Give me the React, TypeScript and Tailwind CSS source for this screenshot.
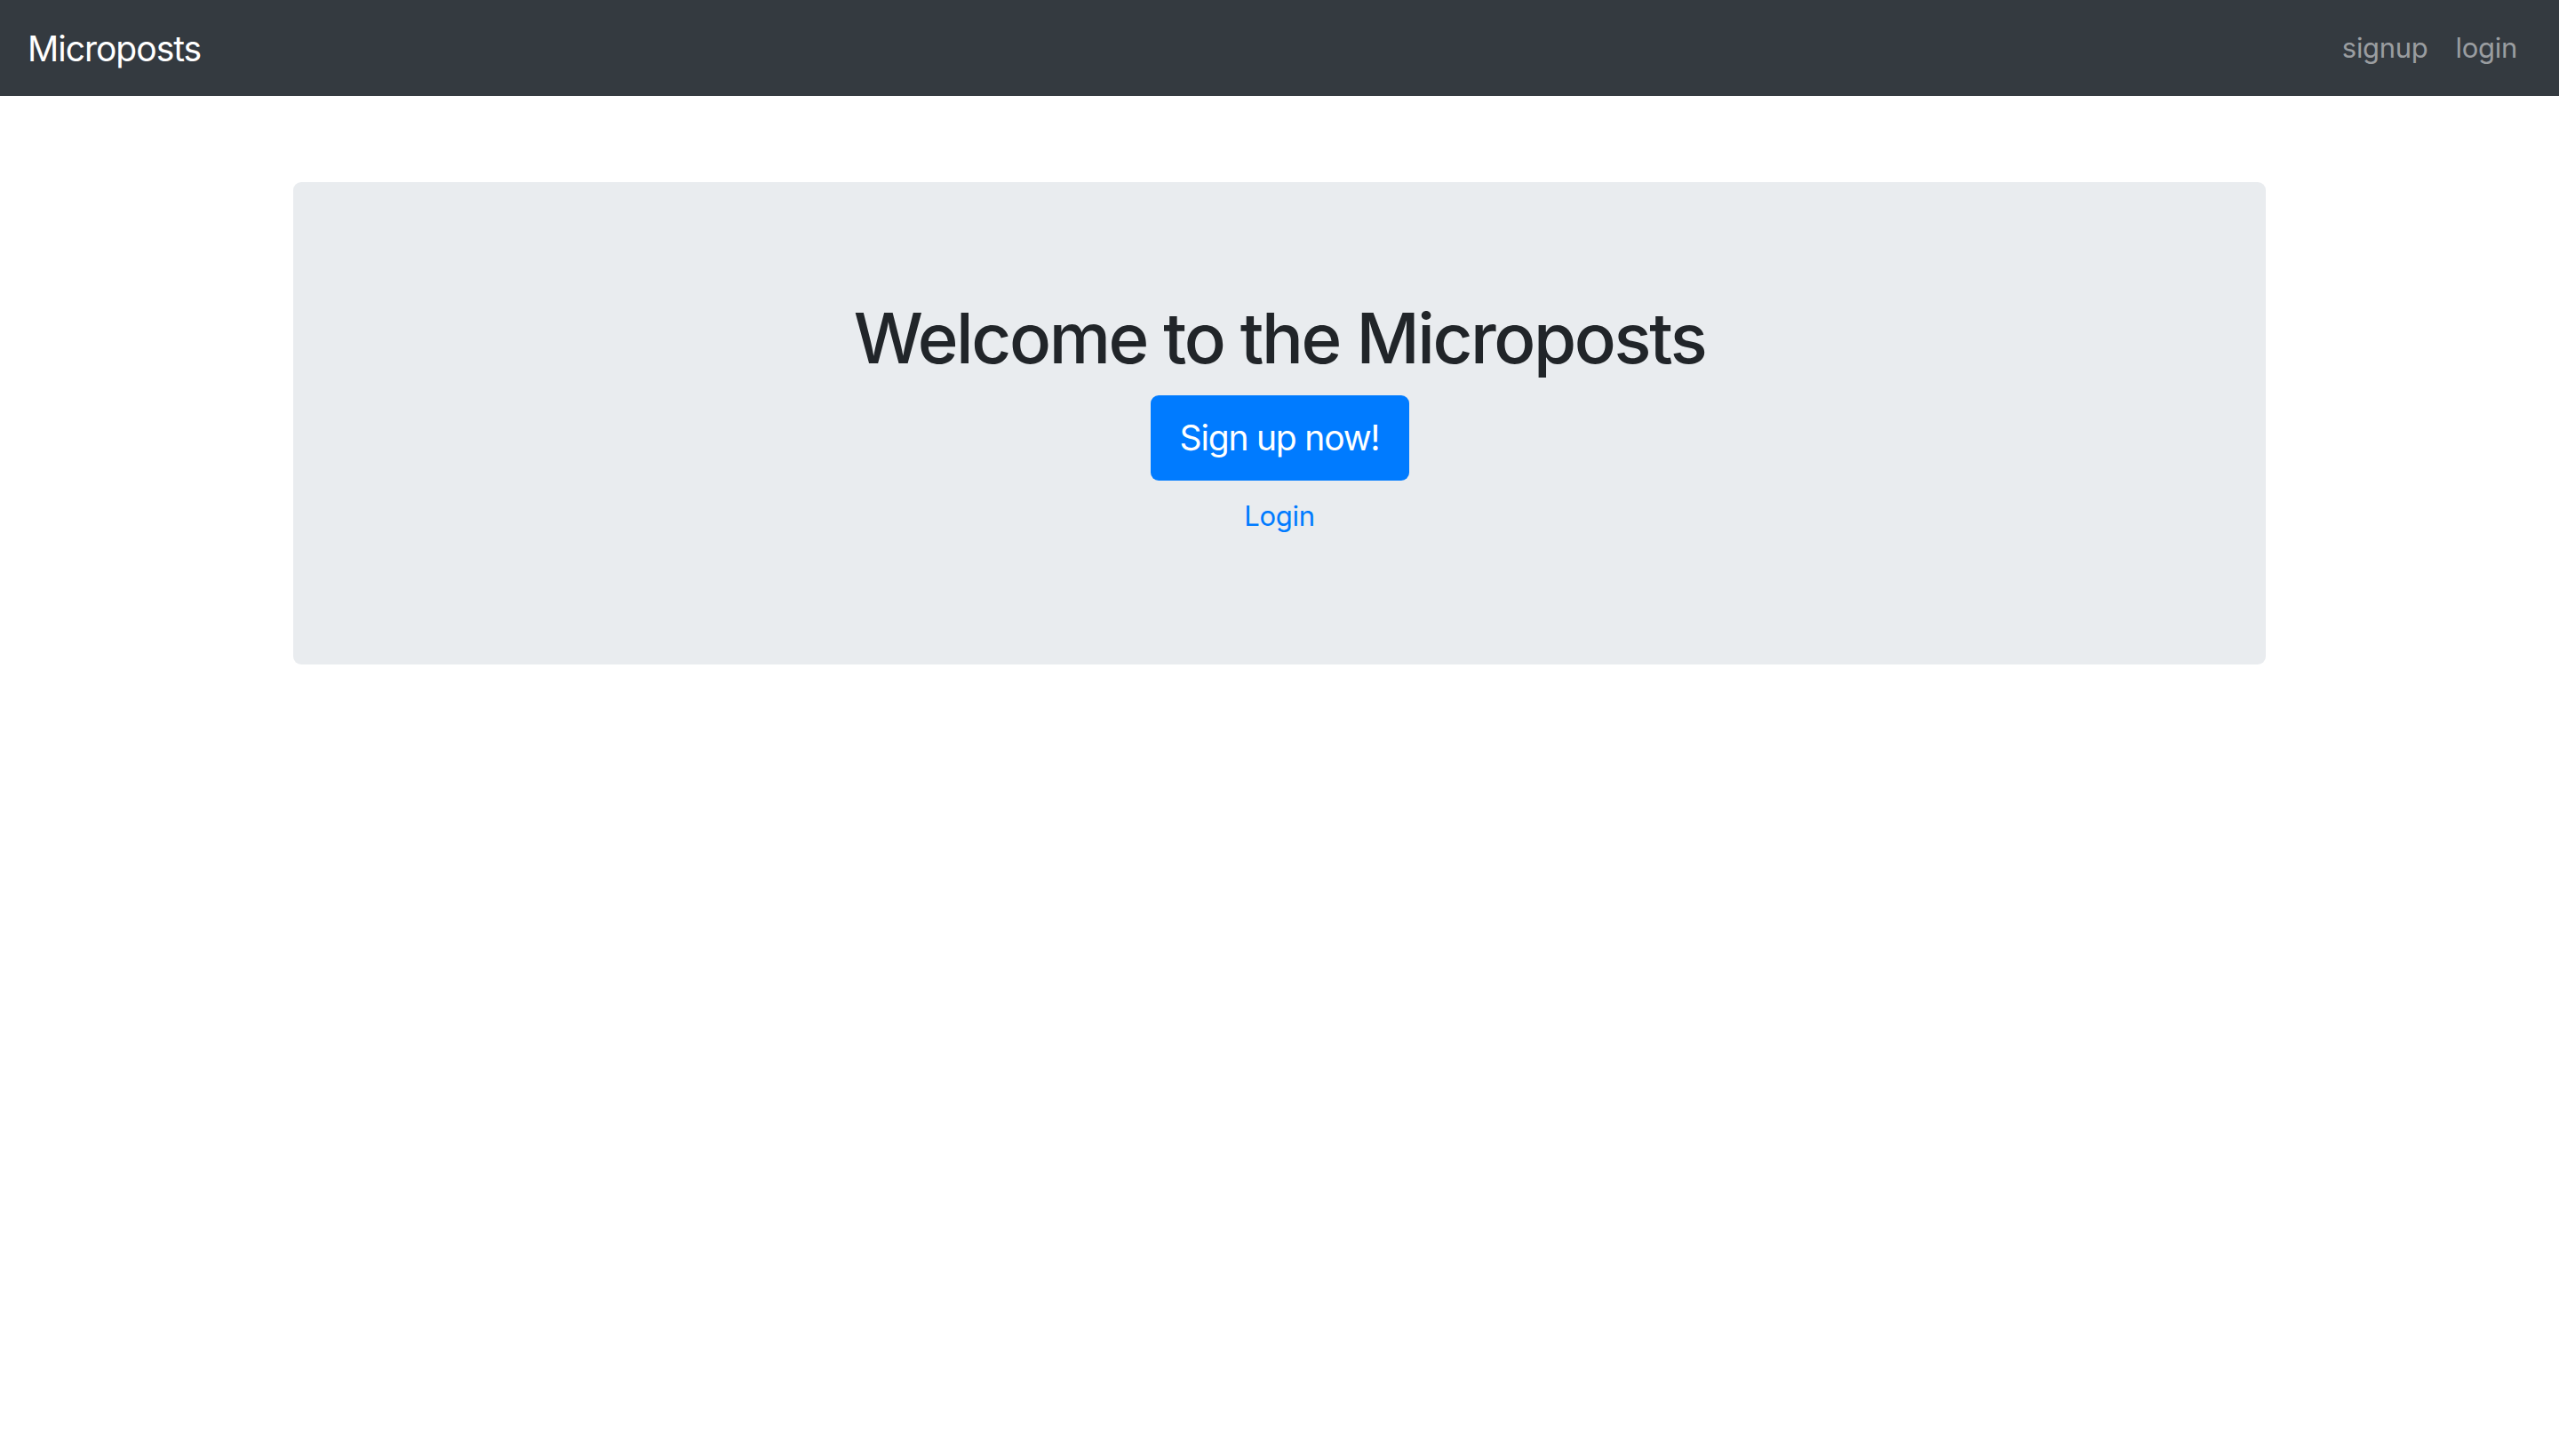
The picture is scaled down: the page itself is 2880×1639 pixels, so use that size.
const App = () => {
  return (
    <div className="min-h-screen bg-white" style={{ fontFamily: 'Inter, "Liberation Sans", sans-serif' }}>
      <nav className="flex h-[108px] items-center justify-between bg-[#343a40] pl-[31px] pr-[47px]">
        <a href="#" className="text-[39px] leading-none tracking-[-1px] text-white">
          Microposts
        </a>
        <div className="flex items-center gap-[31px] text-[31px] tracking-[-0.3px] text-[#9a9da0]">
          <a href="#">signup</a>
          <a href="#">login</a>
        </div>
      </nav>

      <div className="px-[330px] pt-[97px]">
        <div className="flex flex-col items-center rounded-[9px] bg-[#e9ecef] pt-[129px] pb-[144px]">
          <h1 className="mb-[17px] text-[78px] leading-[94px] font-medium tracking-[-2.4px] text-[#212529]">
            Welcome to the Microposts
          </h1>
          <a
            href="#"
            className="flex h-[96px] w-[291px] items-center justify-center rounded-[9px] bg-[#007bff] text-[39px] tracking-[-1.2px] text-white"
          >
            Sign up now!
          </a>
          <a href="#" className="mt-[17px] text-[31px] leading-[46px] tracking-[-0.3px] text-[#007bff]">
            Login
          </a>
        </div>
      </div>
    </div>
  );
};

export default App;
